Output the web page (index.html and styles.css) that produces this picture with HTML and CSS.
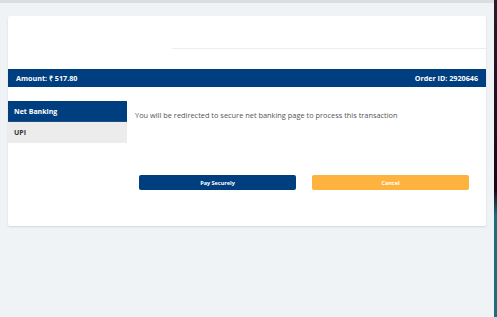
FILE: index.html
```html
<!DOCTYPE html>
<html lang="en">
<head>
  <meta charset="UTF-8">
  <meta name="viewport" content="width=device-width, initial-scale=1.0">
  <title>Payment</title>
  <link rel="stylesheet" href="styles.css">
</head>
<body>
  <div class="page">
    <div class="topbar"></div>
    <div class="card">
      <div class="card-head">
        <div class="logo"></div>
        <div class="head-right"></div>
      </div>
      <div class="summary">
        <span>Amount: ₹ 517.80</span>
        <span>Order ID: 2920646</span>
      </div>
      <div class="pay-body">
        <ul class="tabs">
          <li class="tab active">Net Banking</li>
          <li class="tab">UPI</li>
        </ul>
        <div class="tab-content">
          <p class="note">You will be redirected to secure net banking page to process this transaction</p>
          <div class="actions">
            <button class="btn btn-pay">Pay Securely</button>
            <button class="btn btn-cancel">Cancel</button>
          </div>
        </div>
      </div>
    </div>
  </div>
  <div class="edge"></div>
</body>
</html>
```

FILE: styles.css
```css
html, body {
  margin: 0;
  padding: 0;
  height: 100%;
}
body {
  display: flex;
  font-family: "Open Sans", Arial, sans-serif;
  background: #eff3f6;
}
.page {
  flex: 1;
  background: #eff3f6;
}
.edge {
  width: 3px;
  background: linear-gradient(#2a1a2a 0%, #1a0716 60%, #1e6d7a 68%, #1e6d7a 100%);
}
.topbar {
  height: 3px;
  background: #dcdde0;
}
.card {
  margin: 13px 8px 0 8px;
  background: #fff;
  border-radius: 2px;
  box-shadow: 0 1px 2px rgba(0,0,0,0.12);
  padding-bottom: 36px;
}
.card-head {
  display: flex;
  height: 53px;
}
.logo {
  width: 164px;
}
.head-right {
  flex: 1;
  height: 32px;
  border-bottom: 1px solid #eceef0;
}
.summary {
  display: flex;
  justify-content: space-between;
  align-items: center;
  height: 18px;
  padding: 0 8px;
  background: #003f7f;
  color: #fff;
  font-size: 7.2px;
  font-weight: 700;
}
.pay-body {
  display: flex;
  margin-top: 14px;
}
.tabs {
  list-style: none;
  margin: 0;
  padding: 0;
  width: 119px;
}
.tab {
  height: 21px;
  line-height: 21px;
  padding-left: 6px;
  font-size: 7px;
  font-weight: 700;
  background: #ececec;
  color: #333;
}
.tab.active {
  background: #003f7f;
  color: #fff;
  border-bottom: 1px solid #1d4f85;
  height: 20px;
}
.tab-content {
  flex: 1;
  padding: 0 17px 0 8px;
}
.note {
  margin: 9px 0 0 0;
  font-size: 7.4px;
  color: #555;
}
.actions {
  display: flex;
  gap: 16px;
  margin: 55px 0 0 4px;
}
.btn {
  flex: 1;
  height: 15px;
  border: 0;
  border-radius: 2px;
  color: #fff;
  font-family: "Open Sans", Arial, sans-serif;
  font-size: 5.5px;
  font-weight: 700;
  padding: 0;
}
.btn-pay {
  background: #003f7f;
}
.btn-cancel {
  background: #ffb33f;
}
```
